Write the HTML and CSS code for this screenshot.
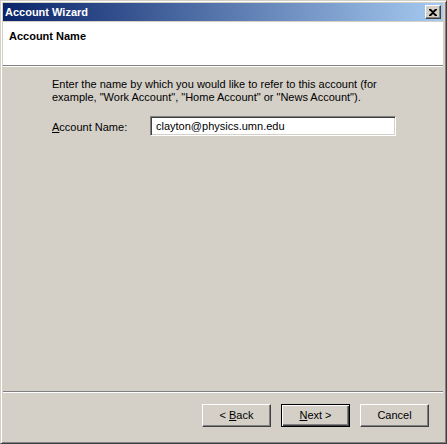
FILE: index.html
```html
<!DOCTYPE html>
<html>
	<head>
		<meta charset="utf-8">
		<title>Account Wizard</title>
		<link rel="stylesheet" href="styles.css">
	</head>
	<body>
		<div class="window">
			<div class="titlebar">
				<span class="title">Account Wizard</span>
				<span class="close">
					<svg width="8" height="7" viewBox="0 0 8 7">
						<path d="M0 0h2l2 2 2-2h2v1L5 3.5 8 6v1H6L4 5 2 7H0V6l3-2.5L0 1z" fill="#000"/>
					</svg>
				</span>
			</div>
			<div class="header">
				<h1>Account Name</h1>
			</div>
			<div class="rule"></div>
			<div class="content">
				<p class="intro">Enter the name by which you would like to refer to this account (for example, "Work Account", "Home Account" or "News Account").</p>
				<div class="field">
					<label for="acct"><u>A</u>ccount Name:</label>
					<div class="input" id="acct">clayton@physics.umn.edu</div>
				</div>
			</div>
			<div class="rule"></div>
			<div class="buttons">
				<div class="btn">&lt; <u>B</u>ack</div>
				<div class="btn default"><u>N</u>ext &gt;</div>
				<div class="btn">Cancel</div>
			</div>
		</div>
	</body>
</html>
```

FILE: styles.css
```css
html,
body {
	margin: 0;
	padding: 0;
	background: #d4d0c8;
}

body {
	font-family: "Liberation Sans", Arial, sans-serif;
	font-size: 11px;
	color: #000;
}

.window {
	width: 447px;
	height: 444px;
	box-sizing: border-box;
	display: flex;
	flex-direction: column;
	background: #d4d0c8;
	border: 1px solid;
	border-color: #d4d0c8 #404040 #404040 #d4d0c8;
	box-shadow: inset 1px 1px #fff, inset -1px -1px #808080;
	padding: 2px 3px 3px 2px;
}

.titlebar {
	height: 18px;
	flex: none;
	display: flex;
	align-items: center;
	justify-content: space-between;
	background: linear-gradient(to right, #0a246a, #a6caf0);
	margin-bottom: 1px;
	padding: 0 2px 0 2px;
}

.title {
	color: #fff;
	font-weight: bold;
	font-size: 11px;
	line-height: 18px;
}

.close {
	width: 16px;
	height: 14px;
	box-sizing: border-box;
	display: flex;
	align-items: center;
	justify-content: center;
	background: #d4d0c8;
	border: 1px solid;
	border-color: #fff #404040 #404040 #fff;
	box-shadow: inset -1px -1px #808080;
}

.header {
	height: 43px;
	flex: none;
	background: #fff;
	padding: 0 6px;
	box-sizing: border-box;
}

.header h1 {
	margin: 0;
	padding-top: 8px;
	font-size: 11px;
	line-height: 13px;
	font-weight: bold;
}

.rule {
	flex: none;
	border-top: 1px solid #808080;
	border-bottom: 1px solid #fff;
}

.content {
	flex: 1;
	padding: 11px 20px 0 49px;
}

.intro {
	margin: 0;
	line-height: 13px;
	width: 340px;
}

.field {
	display: flex;
	align-items: center;
	margin-top: 12px;
}

.field label {
	width: 98px;
	flex: none;
	padding-top: 1px;
}

.input {
	width: 246px;
	height: 20px;
	box-sizing: border-box;
	background: #fff;
	border: 1px solid;
	border-color: #808080 #fff #fff #808080;
	box-shadow: inset 1px 1px #404040, inset -1px -1px #d4d0c8;
	padding: 0 5px;
	line-height: 18px;
}

.buttons {
	flex: none;
	display: flex;
	justify-content: flex-end;
	gap: 10px;
	padding: 11px 14px 13px 0;
}

.btn {
	width: 69px;
	height: 23px;
	box-sizing: border-box;
	text-align: center;
	line-height: 21px;
	border: 1px solid;
	border-color: #fff #404040 #404040 #fff;
	box-shadow: inset -1px -1px #808080;
}

.btn.default {
	border-color: #000;
	box-shadow: inset 1px 1px #fff, inset -1px -1px #404040, inset -2px -2px #808080;
}
```
